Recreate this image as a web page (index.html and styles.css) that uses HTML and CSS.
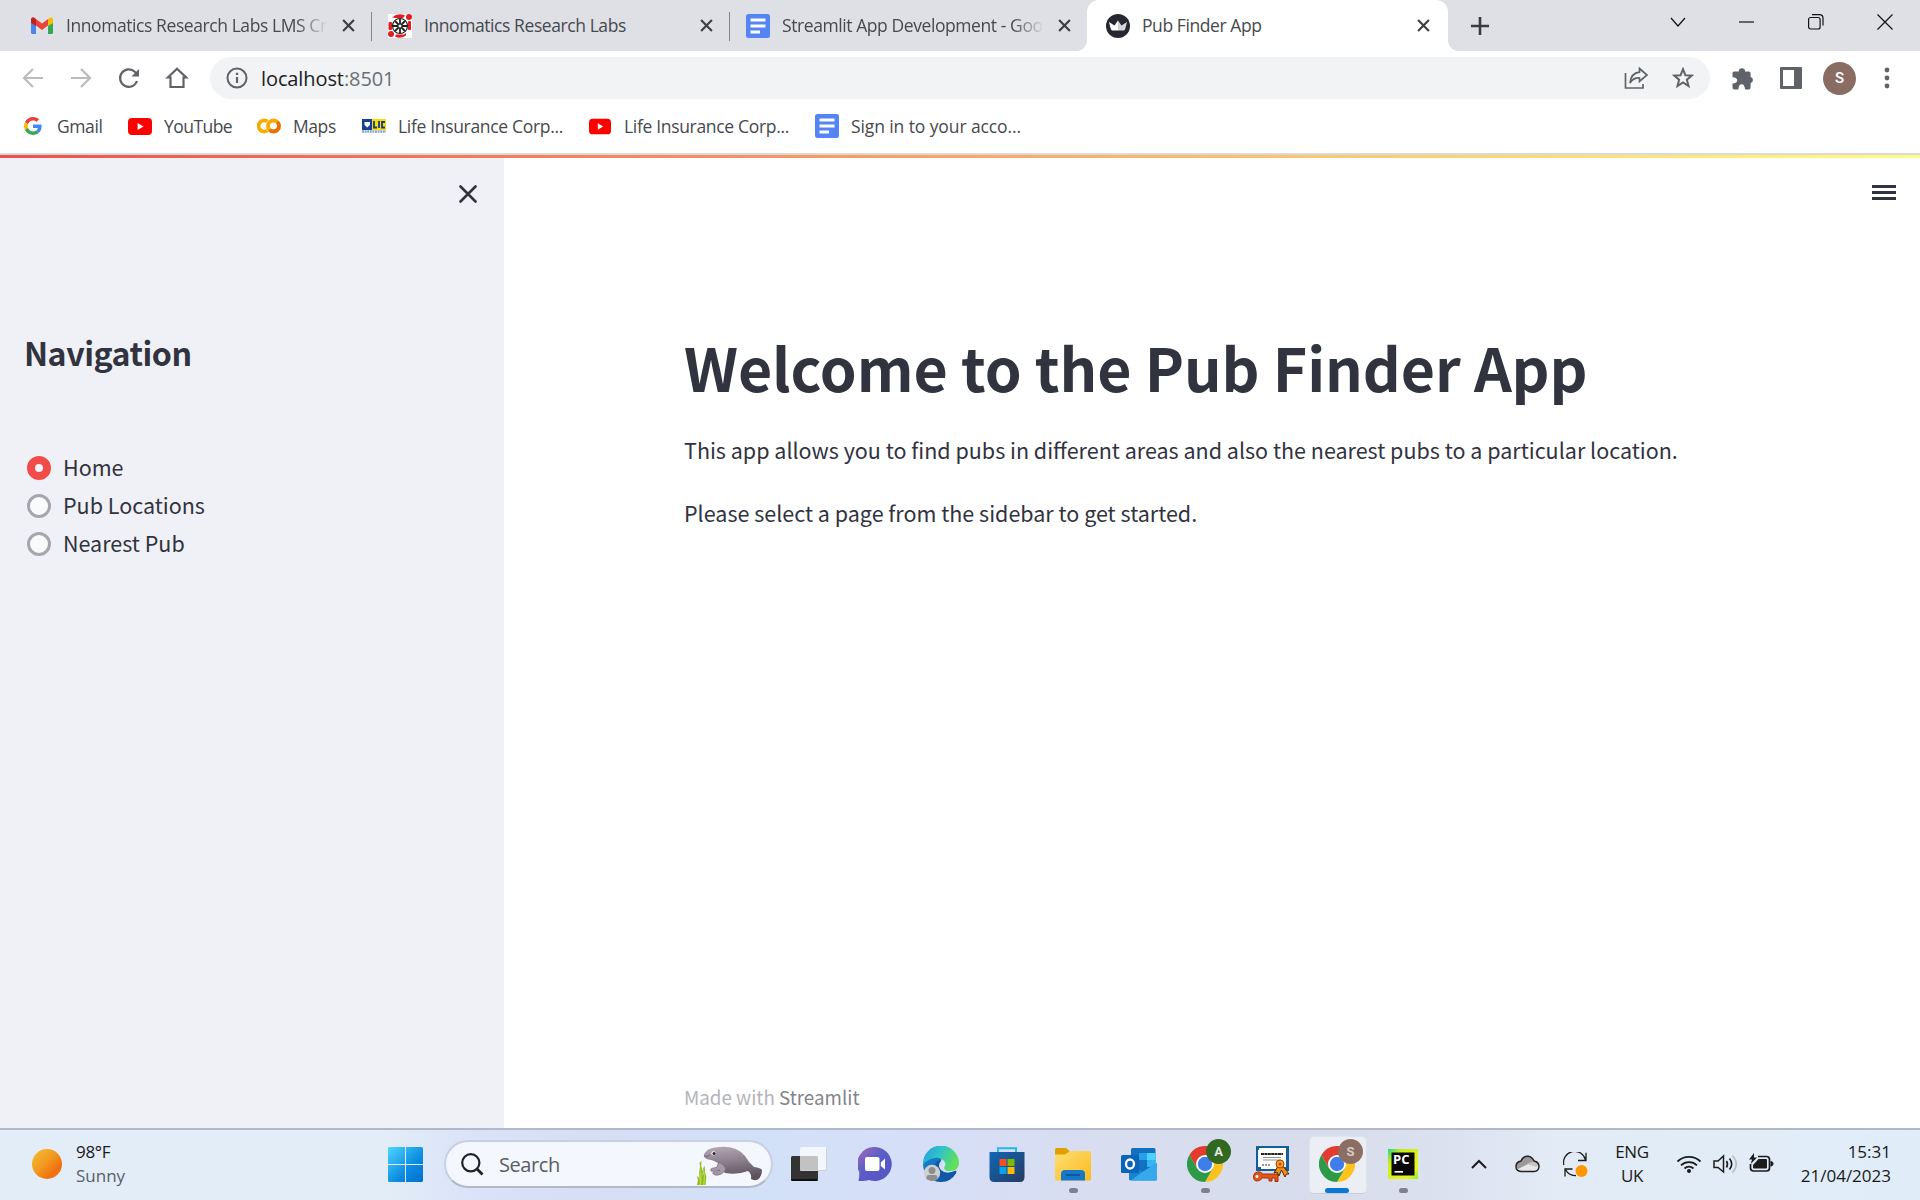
FILE: index.html
```html
<!DOCTYPE html>
<html lang="en">
<head>
<meta charset="utf-8">
<title>Pub Finder App</title>
<link rel="stylesheet" href="styles.css">
</head>
<body>
<svg class="defs" width="0" height="0" aria-hidden="true">
  <defs>
    <linearGradient id="sun" x1="0" y1="0" x2="1" y2="1"><stop offset="0" stop-color="#f2c230"/><stop offset=".45" stop-color="#f29a20"/><stop offset=".75" stop-color="#f07010"/><stop offset="1" stop-color="#ee7a18"/></linearGradient>
    <linearGradient id="win" x1="0" y1="0" x2="1" y2="1"><stop offset="0" stop-color="#4cd6ff"/><stop offset=".6" stop-color="#0d8ce0"/><stop offset="1" stop-color="#0070d0"/></linearGradient>
    <linearGradient id="chat" x1="0" y1="0" x2="1" y2="1"><stop offset="0" stop-color="#a56cb4"/><stop offset=".45" stop-color="#5a5cc8"/><stop offset="1" stop-color="#5554c4"/></linearGradient>
    <linearGradient id="edgeTop" x1="0" y1="0" x2="1" y2=".4"><stop offset="0" stop-color="#1f9be0"/><stop offset=".5" stop-color="#30c4c8"/><stop offset="1" stop-color="#62e05a"/></linearGradient>
    <linearGradient id="edgeLow" x1="0" y1="0" x2="1" y2="1"><stop offset="0" stop-color="#1b86d6"/><stop offset="1" stop-color="#0b4a94"/></linearGradient>
    <linearGradient id="store" x1="0" y1="0" x2="1" y2="1"><stop offset="0" stop-color="#0f68b8"/><stop offset="1" stop-color="#283a60"/></linearGradient>
    <linearGradient id="folder" x1="0" y1="0" x2="1" y2="1"><stop offset="0" stop-color="#ffdf76"/><stop offset="1" stop-color="#fbba1c"/></linearGradient>
    <linearGradient id="pc" x1="0" y1="0" x2="1" y2="1"><stop offset="0" stop-color="#21d789"/><stop offset=".25" stop-color="#c6ee1c"/><stop offset=".8" stop-color="#e8f41c"/><stop offset="1" stop-color="#8ce83c"/></linearGradient>
    <linearGradient id="skin" x1="0" y1="0" x2=".2" y2="1"><stop offset="0" stop-color="#b9aab8"/><stop offset=".5" stop-color="#8d7f8e"/><stop offset="1" stop-color="#5c525e"/></linearGradient>
    <symbol id="chrome" viewBox="0 0 36 36">
      <path fill="#e33b2e" d="M2.4 9A18 18 0 0 1 33.600 9H18L10.200 22.500Z"/>
      <path fill="#fcc31e" d="M33.600 9A18 18 0 0 1 18 36L25.800 22.500L18 9Z"/>
      <path fill="#2d9a48" d="M18 36A18 18 0 0 1 2.400 9L10.200 22.500H25.800Z"/>
      <circle cx="18" cy="18" r="9" fill="#fff"/><circle cx="18" cy="18" r="7.200" fill="#3d7eea"/>
    </symbol>
    <symbol id="docs" viewBox="0 0 24 24">
      <rect width="24" height="24" rx="2.500" fill="#5585f5"/>
      <path stroke="#fff" stroke-width="2.800" d="M4.500 6H19.500M4.500 12H19.500M4.500 18H14"/>
    </symbol>
    <symbol id="yt" viewBox="0 0 24 17"><rect width="24" height="17" rx="4" fill="#f00"/><path fill="#fff" d="M9.600 5L15.500 8.500L9.600 12Z"/></symbol>
    <symbol id="x" viewBox="0 0 12 12"><path d="M1 1L11 11M11 1L1 11" fill="none" stroke="currentColor" stroke-width="2"/></symbol>
  </defs>
</svg>

<header class="tabs">
  <div class="tab tab-first">
    <svg class="fav" width="22" height="17" viewBox="0 0 22 17"><path fill="#4a86f0" d="M0 3.500V15.500Q0 17 1.500 17H5V7Z"/><path fill="#34a853" d="M22 3.500V15.500Q22 17 20.500 17H17V7Z"/><path fill="#fbbc04" d="M17 2L19 .4Q22-.5 22 3V6L17 9Z"/><path fill="#c5221f" d="M5 2L3 .4Q0-.5 0 3V6L5 9Z"/><path fill="#e8453a" d="M5 2L11 6.500L17 2V8.500L11 13L5 8.500Z"/></svg>
    <span class="tab-title fade">Innomatics Research Labs LMS Cr</span>
    <svg class="close" width="13" height="13"><use href="#x"/></svg>
  </div>
  <div class="tab tab-rule">
    <svg class="fav" width="24" height="24" viewBox="0 0 24 24"><rect width="24" height="24" fill="#fff"/><g fill="#e02020"><circle cx="21" cy="3" r="3"/><circle cx="3" cy="20" r="3"/><rect x=".5" y="8" width="3.500" height="8" rx="1"/><rect x="20" y="7" width="3" height="9" rx="1"/><path d="M4 3.500Q10-2 17 1.500L15 4H8ZM8 20.500H16L18 19V21.500Q12 25.500 7 22.500Z"/></g><circle cx="12" cy="12" r="7.500" fill="#fff" stroke="#222" stroke-width="1.200"/><path stroke="#222" stroke-width="1.800" d="M12 5V19M5 12H19M7 7L17 17M17 7L7 17"/><circle cx="12" cy="12" r="1.500" fill="#fff"/></svg>
    <span class="tab-title">Innomatics Research Labs</span>
    <svg class="close" width="13" height="13"><use href="#x"/></svg>
  </div>
  <div class="tab tab-rule">
    <svg class="fav" width="24" height="24"><use href="#docs"/></svg>
    <span class="tab-title fade">Streamlit App Development - Goo</span>
    <svg class="close" width="13" height="13"><use href="#x"/></svg>
  </div>
  <div class="tab active">
    <svg class="fav" width="24" height="24" viewBox="0 0 24 24"><circle cx="12" cy="12" r="12" fill="#262730"/><path fill="#fff" d="M3 8L8.500 11.500L12 6.500V16.500H6.500Q5 16.500 4.500 14Z"/><path fill="#d5d5d8" d="M12 6.500L15.500 11.500L21 8L19.500 14Q19 16.500 17.500 16.500H12Z"/></svg>
    <span class="tab-title">Pub Finder App</span>
    <svg class="close" width="13" height="13"><use href="#x"/></svg>
  </div>
  <svg class="new-tab" width="18" height="18" viewBox="0 0 18 18"><path d="M9 0V18M0 9H18" stroke="#3a3c40" stroke-width="2.600"/></svg>
  <div class="win-ctrl">
    <svg width="16" height="16" viewBox="0 0 16 16"><path d="M1 4L8 12L15 4"/></svg>
    <svg width="16" height="16" viewBox="0 0 16 16"><path d="M0 8H15"/></svg>
    <svg width="16" height="16" viewBox="0 0 16 16"><rect x=".6" y="3.500" width="11.500" height="11.500" rx="2"/><path d="M4 .7H11.500Q15 .7 15 4.200V11.500"/></svg>
    <svg width="16" height="16" viewBox="0 0 16 16"><path d="M.5.5L15.500 15.500M15.500.5L.5 15.500"/></svg>
  </div>
</header>

<nav class="toolbar">
  <svg class="ico dim" width="24" height="24" viewBox="0 0 24 24"><path d="M22 12H3M12 3L3 12L12 21"/></svg>
  <svg class="ico dim" width="24" height="24" viewBox="0 0 24 24"><path d="M2 12H21M12 3L21 12L12 21"/></svg>
  <svg class="ico" width="24" height="24" viewBox="0 0 24 24"><path d="M20 15A8.700 8.700 0 1 1 18 6L19.500 7.500"/><path class="head" d="M22 3V10.500H14.500Z"/></svg>
  <svg class="ico" width="24" height="24" viewBox="0 0 24 24"><path d="M2.800 11.500L12 2.800L21.200 11.500H18.500V21H5.500V11.500Z"/></svg>
  <div class="omnibox">
    <svg class="info" width="22" height="22" viewBox="0 0 22 22"><circle cx="11" cy="11" r="9.500" fill="none" stroke="#5f6368" stroke-width="2"/><path d="M11 10V16M11 5.800V8" stroke="#5f6368" stroke-width="2.200"/></svg>
    <span class="url">localhost<span class="port">:8501</span></span>
    <svg class="share" width="24" height="24" viewBox="0 0 24 24"><path d="M1.500 7V22H19V18" fill="none" stroke="#5f6368" stroke-width="1.700"/><path d="M15.500 2.500L23 9L15.500 15.500V12Q9.500 11.500 6 17Q7 7 15.500 6.200Z" fill="none" stroke="#5f6368" stroke-width="1.700"/></svg>
    <svg class="star" width="22" height="22" viewBox="0 0 22 22"><path d="M11 2.200L13.400 8.200L19.800 8.600L14.900 12.700L16.500 19L11 15.500L5.500 19L7.100 12.700L2.200 8.600L8.600 8.200Z" fill="none" stroke="#5f6368" stroke-width="2"/></svg>
  </div>
  <svg class="ext" width="23" height="23" viewBox="0 0 22 22"><path fill="#5f6368" d="M6.500 4.300A3 3 0 0 1 12.500 4.300H16Q17.800 4.300 17.800 6V9.500A3 3 0 0 1 17.800 15.300V19.500Q17.800 21.500 16 21.500H12.500Q12 16.500 9.300 16.500Q6.500 16.500 6 21.500H2Q.5 21.500 .5 19.500V15.800Q5 15.500 5 12.700Q5 10 .5 9.700V6Q.5 4.300 2 4.300Z"/></svg>
  <svg class="panel" width="22" height="22" viewBox="0 0 22 22"><rect width="22" height="22" rx="1" fill="#5f6368"/><rect x="3" y="3" width="11" height="16" fill="#fff"/></svg>
  <span class="avatar">S</span>
  <svg class="dots" width="6" height="22" viewBox="0 0 6 22"><g fill="#5f6368"><circle cx="3" cy="3" r="2.400"/><circle cx="3" cy="11" r="2.400"/><circle cx="3" cy="19" r="2.400"/></g></svg>
</nav>

<nav class="bookmarks">
  <a class="bm bm-gmail"><svg width="18" height="18" viewBox="0 0 48 48"><path fill="#EA4335" d="M24 9.500c3.540 0 6.710 1.220 9.210 3.600l6.850-6.850C35.900 2.380 30.470 0 24 0 14.620 0 6.510 5.380 2.560 13.220l7.980 6.190C12.430 13.720 17.740 9.500 24 9.500z"/><path fill="#4285F4" d="M46.980 24.550c0-1.570-.15-3.090-.38-4.550H24v9.020h12.940c-.58 2.960-2.260 5.480-4.780 7.180l7.730 6c4.510-4.180 7.090-10.360 7.090-17.650z"/><path fill="#FBBC05" d="M10.530 28.590c-.48-1.450-.76-2.990-.76-4.590s.27-3.140.76-4.590l-7.980-6.190C.92 16.460 0 20.120 0 24s.92 7.540 2.560 10.780z"/><path fill="#34A853" d="M24 48c6.480 0 11.930-2.130 15.890-5.810l-7.730-6c-2.150 1.450-4.920 2.300-8.160 2.300-6.260 0-11.570-4.220-13.470-9.910l-7.980 6.190C6.510 42.620 14.620 48 24 48z"/></svg><span>Gmail</span></a>
  <a class="bm bm-yt"><svg width="24" height="17"><use href="#yt"/></svg><span>YouTube</span></a>
  <a class="bm bm-maps"><svg width="24" height="16" viewBox="0 0 24 16"><g fill="none" stroke-width="3.800"><path stroke="#f9ab00" d="M10.300 3.500A5.500 5.500 0 1 0 10.300 12.500"/><circle cx="16.500" cy="8" r="5.500" stroke="#f9ab00"/><path stroke="#e8710a" d="M20.300 4A5.500 5.500 0 0 1 12.600 11.900"/></g></svg><span>Maps</span></a>
  <a class="bm bm-lic"><svg width="24" height="14" viewBox="0 0 24 14"><rect width="10" height="11" fill="#173f92"/><path fill="#fff" d="M2.500 3H8V6L5.200 8.500L2.500 6Z"/><rect x="10" width="14" height="11" fill="#f8dc10"/><path stroke="#163a86" stroke-width="1.800" fill="none" d="M12 2V8.500H15M17 2V9M23 3H20V8.500H23"/><path stroke="#8aa6cc" stroke-width="2.500" stroke-dasharray="2 .6" d="M0 12.500H24"/></svg><span>Life Insurance Corp...</span></a>
  <a class="bm bm-yt2"><svg width="22" height="17"><use href="#yt"/></svg><span>Life Insurance Corp...</span></a>
  <a class="bm"><svg width="24" height="24"><use href="#docs"/></svg><span class="wide">Sign in to your acco...</span></a>
</nav>

<div class="app-line"></div>
<div class="app">
  <aside class="sidebar">
    <svg class="side-close" width="18" height="18" viewBox="0 0 18 18"><path d="M1.500 1.500L16.500 16.500M16.500 1.500L1.500 16.500" stroke="#31333f" stroke-width="2.600" stroke-linecap="round"/></svg>
    <h2>Navigation</h2>
    <div class="radios">
      <label><i class="radio on"></i><span>Home</span></label>
      <label><i class="radio"></i><span>Pub Locations</span></label>
      <label><i class="radio"></i><span>Nearest Pub</span></label>
    </div>
  </aside>
  <main>
    <div class="menu"><i></i><i></i><i></i></div>
    <h1>Welcome to the Pub Finder App</h1>
    <p>This app allows you to find pubs in different areas and also the nearest pubs to a particular location.</p>
    <p>Please select a page from the sidebar to get started.</p>
    <footer>Made with <span>Streamlit</span></footer>
  </main>
</div>

<div class="taskbar">
  <div class="weather">
    <svg class="sun" width="30" height="30"><circle cx="15" cy="15" r="15" fill="url(#sun)"/></svg>
    <div class="two"><span class="temp">98°F</span><span class="cond">Sunny</span></div>
  </div>
  <svg class="start" width="35" height="35" viewBox="0 0 35 35"><path fill="url(#win)" d="M1.500 0H17V17H0V1.500Q0 0 1.500 0ZM18 0H33.500Q35 0 35 1.500V17H18ZM0 18H17V35H1.500Q0 35 0 33.500ZM18 18H35V33.500Q35 35 33.500 35H18Z"/></svg>
  <div class="search">
    <svg width="23" height="23" viewBox="0 0 23 23"><circle cx="9.800" cy="9.800" r="8.600" fill="none" stroke="#222" stroke-width="2.200"/><path d="M16 16L21.500 21.500" stroke="#222" stroke-width="2.800"/></svg>
    <span>Search</span>
    <svg class="manatee" width="68" height="40" viewBox="0 0 68 40">
      <path fill="#8dbb1c" d="M1 39L2 34L.8 30L2.500 31L3.500 34L3.200 26L4 20L3.500 17L5.500 15L5.200 20L7 26L6.500 30L7.500 28L7.200 22L8.700 20L9 26L10.300 31L9.500 39Z"/><path fill="#b8de3c" d="M3.500 39L4.300 28L4.500 18L5.500 29L5.200 39ZM7 39L8 30L8 23L9 31L8.500 39Z"/>
      <path fill="url(#skin)" d="M8 8Q11 2 21 1.200Q40-1 49 10Q53 17 58 21Q65 22 66 24Q66 30 62 33.500Q58 35 55 33Q56 28 52 25Q42 29 29 27Q27 24 24 19Q19 14 12 13.500Q7 12 8 8Z"/>
      <path fill="#a899aa" stroke="#6f6373" stroke-width=".7" d="M23 16Q29 19 30 23Q26 30 19 29Q15 27 18 26Q21 27 24 24Q19 26 15 25Q14 22 18 22Q22 22 22 18Z"/>
      <circle cx="17.500" cy="7.300" r="2.100" fill="#fff"/><circle cx="18" cy="7.500" r="1.500" fill="#262028"/>
      <path d="M8 10Q12 11 14 9" fill="none" stroke="#65586a" stroke-width=".8"/>
    </svg>
  </div>
  <div class="apps">
    <div class="cell"><svg width="36" height="36" viewBox="0 0 36 36"><rect y="10" width="27" height="25" rx="1.500" fill="#333"/><path stroke="#050505" stroke-width="1.500" d="M.5 34H26.500"/><rect x="9" y="1" width="27" height="24" rx="1.500" fill="#fff" fill-opacity=".7"/><path d="M9.500 24.500H35.500V1.500" fill="none" stroke="#d0d0d0"/></svg></div>
    <div class="cell"><svg width="34" height="36" viewBox="0 0 34 36"><path fill="url(#chat)" d="M17 1A17 17 0 1 1 11 34Q8 35 .5 35Q1.500 32 1.200 26A17 17 0 0 1 17 1Z"/><rect x="7" y="11" width="14.500" height="14" rx="2" fill="#fff"/><path fill="#fff" d="M22.800 16.500L27 12.500V23.500L22.800 20Z"/></svg></div>
    <div class="cell"><svg width="36" height="36" viewBox="0 0 36 36"><path fill="url(#edgeLow)" d="M0 18Q4 9 13 10Q20 11 18 15Q13 20 17 25Q23 29 32 25Q34 24 33 27Q28 36 18 36A18 18 0 0 1 0 18Z"/><path fill="#0f57a8" d="M12 20Q12 15 18 14Q14 20 18 24Q23 29 32 25Q34 24 33 27Q29 34 21 34Q13 31 12 20Z"/><path fill="url(#edgeTop)" d="M0 18A18 18 0 0 1 36 17Q36 24 28 25Q20 25 21.500 21Q24 17 20 14Q12 8 0 18Z"/><circle cx="9" cy="27" r="8.200" fill="#d0d0d0"/><circle cx="9" cy="24.500" r="3.500" fill="#8d8d8d"/><path fill="#8d8d8d" d="M3.500 33V31Q3.500 29 6 29H12Q14.500 29 14.500 31V33Q9 37 3.500 33Z"/></svg></div>
    <div class="cell"><svg width="36" height="36" viewBox="0 0 36 36"><path d="M9 8V2.200H27V8" fill="none" stroke="#22b8f0" stroke-width="2"/><path fill="url(#store)" d="M.5 6H35.500V31Q35.500 36 31 36H5Q.5 36 .5 31Z"/><path fill="#f25022" d="M10.500 13H17.500V20H10.500Z"/><path fill="#7fba00" d="M18.500 13H25.500V20H18.500Z"/><path fill="#00a4ef" d="M10.500 21H17.500V28H10.500Z"/><path fill="#ffb900" d="M18.500 21H25.500V28H18.500Z"/></svg></div>
    <div class="cell run"><svg width="36" height="36" viewBox="0 0 36 36"><path fill="#e0a000" d="M0 3.500Q0 2 1.500 2H11L15 5.500V12H0Z"/><path fill="url(#folder)" d="M0 8.500H10L15 5H34.500Q36 5 36 6.500V33Q36 34.500 34.500 34.500H1.500Q0 34.500 0 33Z"/><path fill="#1878c8" d="M6 34.500V28Q6 24 10 24H26Q30 24 30 28V34.500Z"/><path stroke="#0c4f92" stroke-width="1.600" d="M11 29H25"/></svg></div>
    <div class="cell"><svg width="36" height="36" viewBox="0 0 36 36"><rect x="10" y="2" width="24.500" height="26" rx="1.500" fill="#1270be"/><path fill="#28a0e8" d="M18 7H26V14H18Z"/><path fill="#50d0ff" d="M26 7H34.500V14H26Z"/><path fill="#34b4f4" d="M26 14H34.500V21H26Z"/><path fill="#1684d0" d="M8 18L22 26L36 17V33Q36 34.500 34 34.500H10Q8 34.500 8 33Z"/><path fill="#38a8ec" d="M36 17V33Q36 34.500 34 34.500H10L22 25.500Z"/><rect y="9" width="18" height="18" rx="1.500" fill="#0a64b8"/><ellipse cx="9" cy="18" rx="4" ry="4.500" fill="none" stroke="#fff" stroke-width="2.300"/></svg></div>
    <div class="cell run"><svg width="36" height="36"><use href="#chrome"/></svg><b class="badge green">A</b></div>
    <div class="cell"><svg width="36" height="36" viewBox="0 0 36 36"><path fill="#125f9c" d="M3 0H36V25H3Z"/><path fill="#fff" d="M6 2H33V21H31V23H8V21H5V4H6Z"/><path stroke="#222" stroke-width="1.800" stroke-dasharray="3 .4" d="M8 8H30"/><path stroke="#777" stroke-width=".8" d="M10 11.500H28M10 14H28"/><path stroke="#333" stroke-width="1.200" stroke-dasharray="2 1" d="M9 19H18"/><path fill="#e05818" stroke="#a82c08" stroke-width="1" d="M4.500 26Q8 25 9.500 28H25V35.500H22V32H19V35H16V32H9.500Q7 35.500 3 35Q0 34 .5 30Q1 26.500 4.500 26Z"/><circle cx="4" cy="30.500" r="1.500" fill="#fff"/><path fill="#f09010" stroke="#5c2404" stroke-width="1" d="M25 20L21 27L24 26L26 30L28.500 24L32 31L33.500 28L36 28L30 20Z"/><circle cx="27" cy="18" r="4" fill="#f6a818" stroke="#a83810" stroke-width="1"/><circle cx="27" cy="18" r="1.500" fill="#d84010"/></svg></div>
    <div class="cell current"><svg width="36" height="36"><use href="#chrome"/></svg><b class="badge brown">S</b></div>
    <div class="cell run"><svg width="30" height="30" viewBox="0 0 30 30"><rect width="30" height="30" fill="url(#pc)"/><rect x="3.500" y="3.500" width="23" height="23" fill="#080808"/><path stroke="#fff" stroke-width="1.700" d="M6.500 22.800H15"/></svg><span class="pc-text">PC</span></div>
  </div>
  <div class="tray">
    <svg class="up" width="16" height="10" viewBox="0 0 16 10"><path d="M1 9L8 2L15 9" fill="none" stroke="#1c1c1c" stroke-width="2"/></svg>
    <svg class="cloud" width="25" height="18" viewBox="0 0 25 18"><path fill="#e8e8e8" d="M6 16.500Q1 16 1 11.500Q1 7 6 6Q8 1 13 1.300Q17 1.500 19 6Q24 7 24 11.500Q23.500 16.500 19 16.500Z"/><path fill="#9a9a9a" d="M1 11.500Q1 7 6 6Q8 1 13 1.300Q17 1.500 19 6L3 14Z"/><path fill="#c4c4c4" d="M12 9L19 6Q23 7 24 10L21 12Z"/><path fill="none" stroke="#222" stroke-width="1.500" d="M6 16.500Q1 16 1 11.500Q1 7 6 6Q8 1 13 1.300Q17 1.500 19 6Q24 7 24 11.500Q23.500 16.500 19 16.500Z"/></svg>
    <svg class="sync" width="25" height="25" viewBox="0 0 25 25"><path d="M.8 13A11 11 0 0 1 22.500 8M15 8.500H23V.8M9.500 17H2V24.500M2.500 17.500Q6 24 13 23.500" fill="none" stroke="#1c1c1c" stroke-width="1.300"/><circle cx="18.500" cy="19" r="6" fill="#ff9800"/></svg>
    <div class="two lang"><span>ENG</span><span>UK</span></div>
    <svg class="wifi" width="26" height="20" viewBox="0 0 26 20"><g fill="none" stroke="#1c1c1c" stroke-width="1.800"><path d="M1.500 7.500A16.500 16.500 0 0 1 24.500 7.500M5 11.300A11.500 11.500 0 0 1 21 11.300M8.500 14.500A6.500 6.500 0 0 1 17.500 14.500"/></g><circle cx="13" cy="17" r="2" fill="#1c1c1c"/></svg>
    <svg class="vol" width="25" height="20" viewBox="0 0 25 20"><path d="M1 7H5L10.500 2V18L5 13.500H1Z" fill="none" stroke="#1c1c1c" stroke-width="1.500"/><path d="M13.500 7Q15.500 10 13.500 13.500M16.500 4.500Q21 10 16.500 15.500" fill="none" stroke="#1c1c1c" stroke-width="1.600"/><path d="M19.500 1.500Q27 10 19.500 18.500" fill="none" stroke="#b9bec6" stroke-width="1.600"/></svg>
    <svg class="bat" width="25" height="20" viewBox="0 0 25 20"><path d="M9 3.500H17.500Q20.500 3.500 20.500 6.500V15Q20.500 18 17.500 18H4.500Q1.500 18 1.500 15V11" fill="none" stroke="#1c1c1c" stroke-width="1.700"/><path d="M9.500 6H17Q18 6 18 7V14.500Q18 15.500 17 15.500H5Q4 15.500 4 14.500V12Z" fill="#1c1c1c"/><path d="M21.500 8Q24.500 8.500 24.500 10.700Q24.500 13 21.500 13.500Z" fill="#1c1c1c"/><path fill="#1c1c1c" d="M5 0L0 6.500H3L1.800 11L8 4.500H5Z"/></svg>
    <div class="two clock"><span>15:31</span><span>21/04/2023</span></div>
  </div>
</div>
</body>
</html>
```
FILE: styles.css
```css
* { box-sizing: border-box; }
body {
  margin: 0;
  width: 1920px;
  height: 1200px;
  overflow: hidden;
  display: flex;
  flex-direction: column;
  background: #fff;
  font-family: "Open Sans", "Noto Sans", sans-serif;
  font-size: 17.5px;
  letter-spacing: -0.42px;
  color: #46494d;
}
svg { display: block; flex: none; }
.defs { position: absolute; }

/* Browser tabs */
.tabs { display: flex; align-items: center; height: 51px; flex: none; background: #dfe0e6; }
.tab { display: flex; align-items: center; height: 51px; width: 358px; flex: none; position: relative; padding-left: 17px; }
.tab-first { width: 371px; padding-left: 31px; }
.tab-first .fav { margin-right: 13px; }
.tab-rule::before { content: ""; position: absolute; left: 0; top: 12px; width: 1px; height: 29px; background: #84868c; }
.fav { margin-right: 12px; }
.tab-title { width: 264px; padding-bottom: 1px; white-space: nowrap; overflow: hidden; }
.tab-title.fade { width: 262px; margin-right: 2px; -webkit-mask-image: linear-gradient(90deg, #000 88%, transparent 100%); mask-image: linear-gradient(90deg, #000 88%, transparent 100%); }
.close { margin-left: 12px; color: #3c4043; }
.tab.active { width: 361px; padding-left: 19px; background: #fff; border-radius: 12px 12px 0 0; }
.tab.active .tab-title { width: 263px; }
.tab.active::before, .tab.active::after { content: ""; position: absolute; bottom: 0; width: 10px; height: 10px; }
.tab.active::before { left: -10px; background: radial-gradient(circle at 0 0, transparent 9.5px, #fff 10px); }
.tab.active::after { right: -10px; background: radial-gradient(circle at 100% 0, transparent 9.500px, #fff 10px); }
.new-tab { margin-left: 23px; }
.win-ctrl { display: flex; gap: 53px; margin: 0 27px 8px auto; }
.win-ctrl path, .win-ctrl rect { fill: none; stroke: #111; stroke-width: 1.200; }

/* Toolbar */
.toolbar { display: flex; align-items: center; height: 54px; flex: none; padding-left: 21px; }
.ico { margin-right: 24px; }
.ico path { fill: none; stroke: #5f6368; stroke-width: 2.200; }
.ico.dim path { stroke: #b9bbbe; }
.ico .head { fill: #5f6368; stroke: none; }
.omnibox { display: flex; align-items: center; width: 1500px; height: 42px; margin-left: -3px; padding-left: 16px; border-radius: 21px; background: #f1f3f4; }
.url { margin-left: 13px; font-size: 20px; letter-spacing: -0.1px; color: #202124; }
.port { color: #6b6f74; }
.share { margin-left: auto; margin-right: 24px; }
.star { margin-right: 16px; }
.ext { margin-left: 22px; }
.panel { margin-left: 25px; }
.avatar { display: flex; align-items: center; justify-content: center; width: 33px; height: 33px; margin-left: 21px; border-radius: 50%; background: #8a6d62; color: #fff; font: 500 15px Roboto, sans-serif; letter-spacing: 0; }
.dots { margin-left: 28px; }

/* Bookmarks */
.bookmarks { display: flex; align-items: center; height: 48px; flex: none; padding: 0 0 6px 24px; }
.bm { display: flex; align-items: center; gap: 12px; white-space: nowrap; }
.bm span { padding-bottom: 1px; }
.bm-gmail { width: 104px; gap: 15px; }
.bm-yt { width: 129px; }
.bm-yt span { letter-spacing: -0.55px; }
.bm-maps { width: 105px; }
.bm-lic { width: 227px; }
.bm-yt2 { width: 226px; gap: 13px; }
.bm-lic span, .bm-yt2 span { letter-spacing: -0.32px; }
.bm .wide { letter-spacing: -0.1px; }

/* Streamlit page */
.app-line { height: 5px; flex: none; border-top: 2px solid #d9dadc; background: linear-gradient(90deg, #f0504a, #fffd80); }
.app { display: flex; flex: 1; font-family: "Noto Sans CJK JP", sans-serif; letter-spacing: 0; color: #31333f; font-size: 21.5px; }
.sidebar { width: 504px; padding: 27px 24px; background: #f0f1f6; }
.side-close { margin-left: 435px; }
h2 { margin: 127px 0 0; font-size: 32.2px; font-weight: 600; line-height: 44px; letter-spacing: -0.5px; }
.radios { padding: 75px 0 0 3px; }
.radios label { display: flex; align-items: center; height: 38px; gap: 12px; }
.radios span { line-height: 34px; padding-bottom: 3px; }
.radio { width: 24px; height: 24px; border-radius: 50%; border: 3px solid #a5a6ae; background: #f9fafc; }
.radio.on { border: 8px solid #f14c48; background: #f4f5fa; }
main { flex: 1; display: flex; flex-direction: column; padding: 27px 24px 17px 180px; }
.menu { align-self: flex-end; display: flex; flex-direction: column; justify-content: space-between; width: 24px; height: 15px; }
.menu i { height: 3px; flex: none; background: #31333f; }
h1 { margin: 127px 0 24px; font-size: 59px; font-weight: 700; line-height: 80px; letter-spacing: -0.08px; white-space: nowrap; }
p { margin: 0 0 25px; line-height: 38px; white-space: nowrap; }
footer { margin-top: auto; font-size: 18.8px; line-height: 28px; color: #b3b4ba; }
footer span { color: #83848c; }

/* Windows taskbar */
.taskbar { position: relative; display: flex; align-items: center; height: 72px; flex: none; border-top: 2px solid #b0b9c5; font-size: 17px; color: #1a1a1a; background: linear-gradient(90deg, #e2edf7 0, #e2edf7 20%, #dae2f8 25%, #d6def4 32%, #d2e1f8 39%, #d6dff8 47%, #d8ddf0 57%, #d8ddec 70%, #dde2f0 76%, #e2ebf6 81%, #e0edf8 100%); }
.weather { display: flex; align-items: center; width: 388px; padding-left: 32px; gap: 14px; }
.sun { margin-bottom: 3px; }
.two { display: flex; flex-direction: column; line-height: 24px; margin-top: -2px; letter-spacing: -0.3px; }
.two .cond { color: #5b6066; letter-spacing: 0; }
.start { margin-bottom: 1px; }
.search { display: flex; align-items: center; width: 329px; height: 48px; margin: -2px 0 0 21px; padding-left: 15px; border: 2px solid #c7d0e2; border-bottom-color: #b0b9ca; border-radius: 24px; background: #f4f7fd; font-size: 20px; color: #5a5d62; }
.search span { margin-left: 15px; }
.manatee { margin: 3px 7px 0 auto; }
.apps { display: flex; margin-left: 3px; }
.cell { position: relative; display: flex; align-items: center; justify-content: center; width: 66px; height: 70px; padding-bottom: 3px; }
.run::after { content: ""; position: absolute; left: 29px; top: 58px; width: 9px; height: 5px; border-radius: 3px; background: #7e828c; }
.current::before { content: ""; position: absolute; left: 5px; top: 6px; width: 56px; height: 56px; border-radius: 5px; background: #ebeef5; border: 1px solid #dfe3ee; border-bottom-color: #c6cbd6; }
.current::after { content: ""; position: absolute; left: 21px; top: 58px; width: 24px; height: 5px; border-radius: 3px; background: #0878d4; }
.current svg { position: relative; }
.badge { position: absolute; left: 34px; top: 9px; width: 25px; height: 25px; border-radius: 50%; color: #e4e8e2; font: 700 13px/25px Roboto, sans-serif; letter-spacing: 0; text-align: center; }
.green { background: #30691f; }
.brown { background: #8d6e63; color: #d8ccc8; }
.pc-text { position: absolute; left: 23px; top: 22px; color: #fff; font: 700 13px/14px "Open Sans", sans-serif; letter-spacing: 0; }
.tray { display: flex; align-items: center; margin-left: 35px; }
.up { margin-bottom: 2px; }
.cloud { margin-left: 28px; margin-bottom: 2px; }
.sync { margin-left: 23px; margin-bottom: 2px; }
.lang { width: 40px; margin-left: 24px; align-items: center; }
.wifi { margin-left: 24px; margin-bottom: 2px; }
.vol { margin-left: 11px; margin-bottom: 2px; }
.bat { margin-left: 11px; margin-bottom: 4px; }
.clock { width: 117px; align-items: flex-end; letter-spacing: 0; }
```
